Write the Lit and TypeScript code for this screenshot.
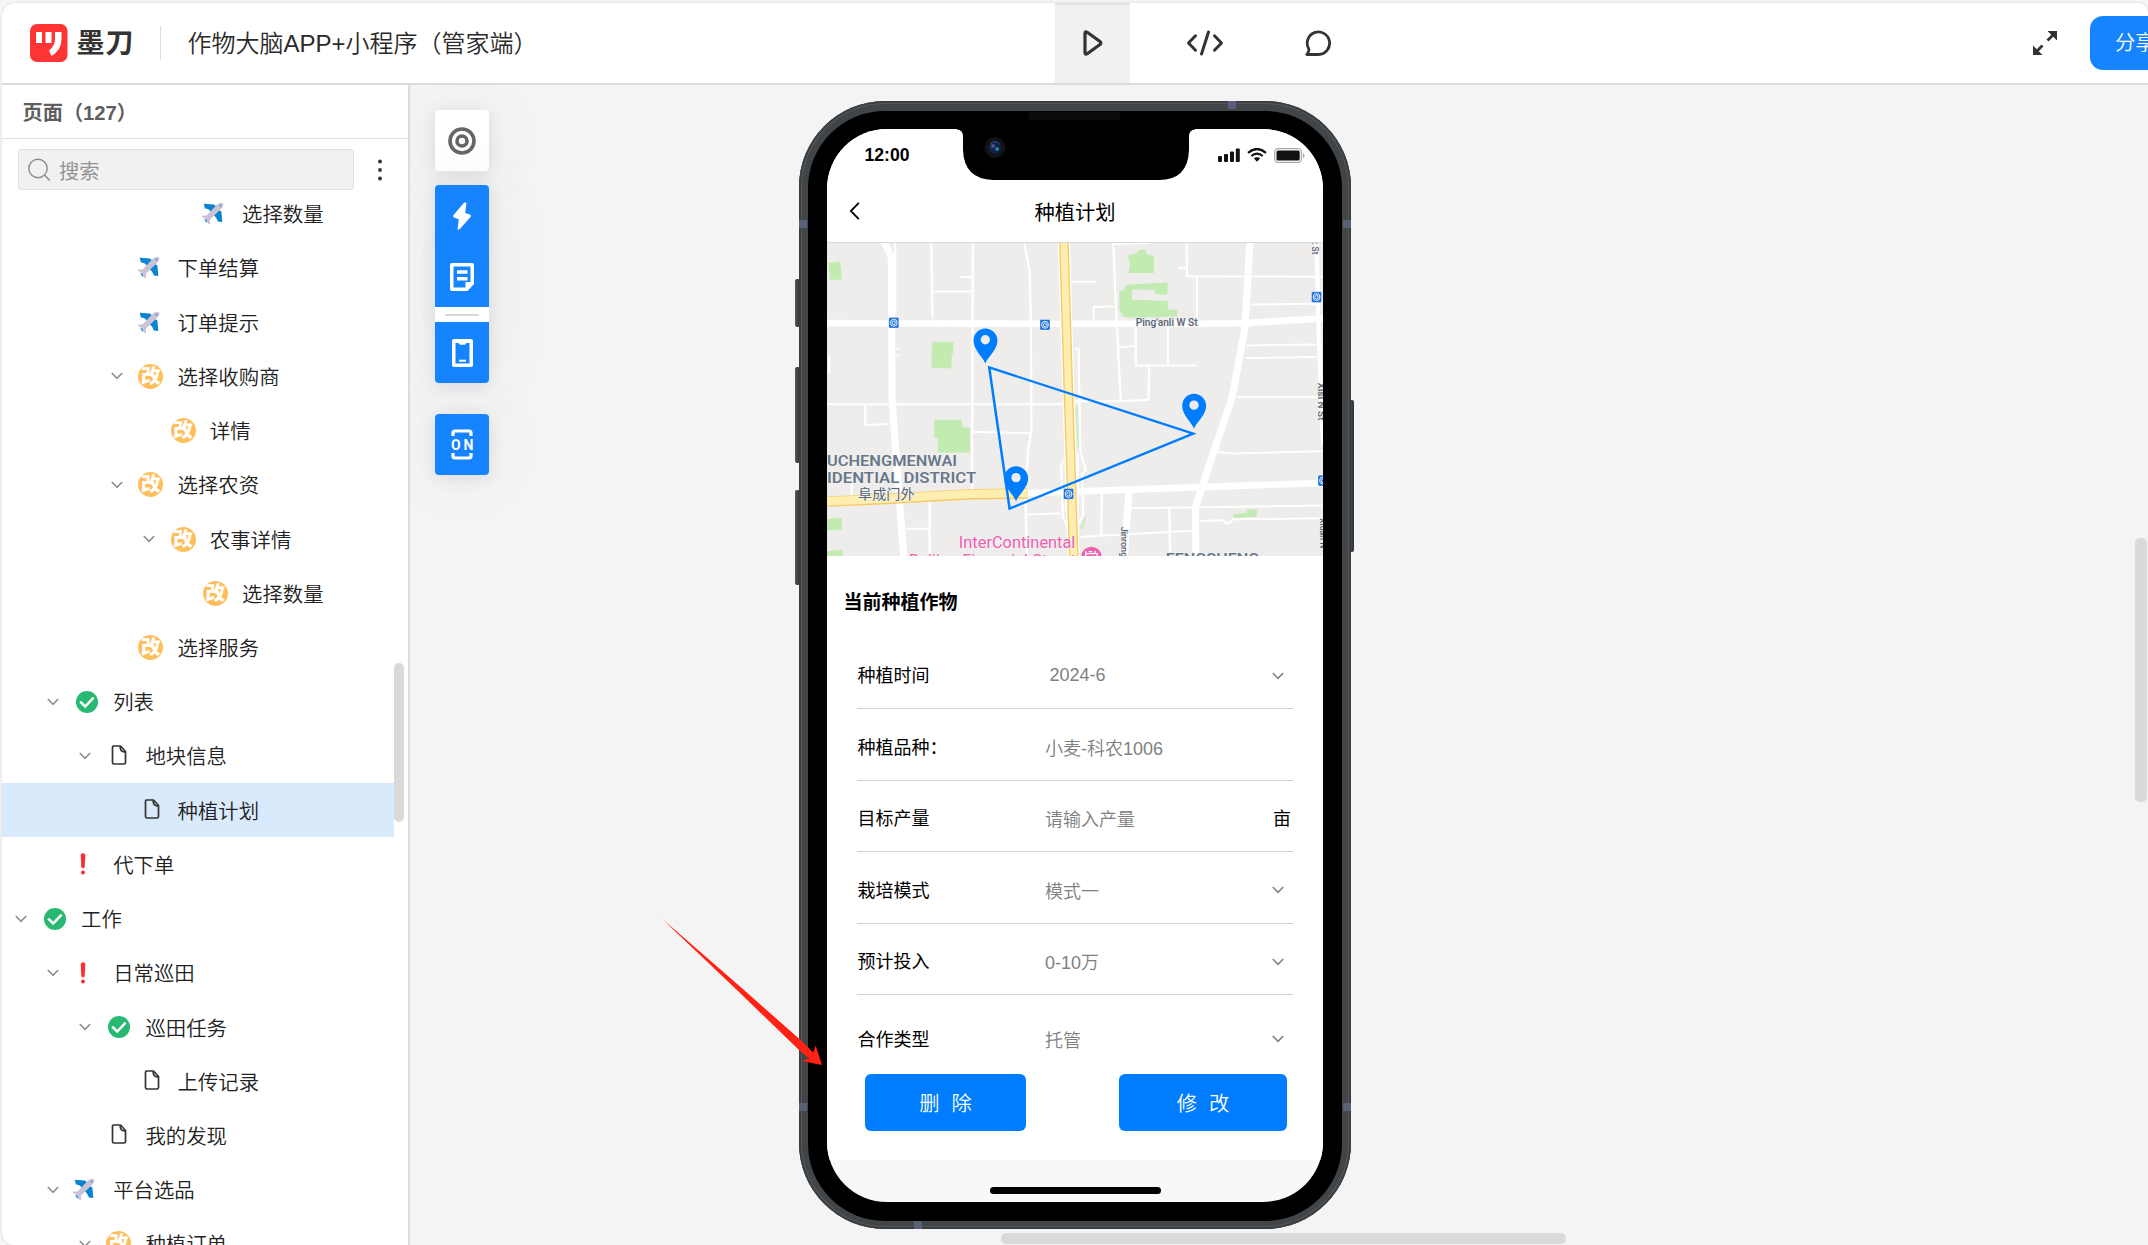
import { LitElement, html, svg, css, nothing } from "lit";
import { customElement, property } from "lit/decorators.js";

type IconKind = "plane" | "edit" | "done" | "file" | "warn";

interface TreeItem {
  label: string;
  level: number;
  icon: IconKind;
  open?: boolean;
  selected?: boolean;
}

const TREE: TreeItem[] = [
  { label: "选择数量", level: 5, icon: "plane" },
  { label: "下单结算", level: 3, icon: "plane" },
  { label: "订单提示", level: 3, icon: "plane" },
  { label: "选择收购商", level: 3, icon: "edit", open: true },
  { label: "详情", level: 4, icon: "edit" },
  { label: "选择农资", level: 3, icon: "edit", open: true },
  { label: "农事详情", level: 4, icon: "edit", open: true },
  { label: "选择数量", level: 5, icon: "edit" },
  { label: "选择服务", level: 3, icon: "edit" },
  { label: "列表", level: 1, icon: "done", open: true },
  { label: "地块信息", level: 2, icon: "file", open: true },
  { label: "种植计划", level: 3, icon: "file", selected: true },
  { label: "代下单", level: 1, icon: "warn" },
  { label: "工作", level: 0, icon: "done", open: true },
  { label: "日常巡田", level: 1, icon: "warn", open: true },
  { label: "巡田任务", level: 2, icon: "done", open: true },
  { label: "上传记录", level: 3, icon: "file" },
  { label: "我的发现", level: 2, icon: "file" },
  { label: "平台选品", level: 1, icon: "plane", open: true },
  { label: "种植订单", level: 2, icon: "edit", open: true },
];

const chevron = html`<svg width="12" height="8" viewBox="0 0 12 8" fill="none" stroke="currentColor" stroke-width="1.600"><path d="M.8 1 6 6.3 11.2 1" /></svg>`;

const treeIcons: Record<IconKind, unknown> = {
  plane: html`<svg class="shift-plane" width="23" height="23" viewBox="0 0 23 23">
    <path d="M2.800 1.800 13 2.600 17 6 11 11.500 8 7.500 3.800 6.200z M21.300 20 20.400 9.500 17 7.500 12 12.500 15 15.500 17 19.500z M3.200 17.600 7 16.700 6 21z" fill="#0a84d0" />
    <path d="M22 1.200C20.500 0 17.500 1 15.600 3L5.500 13.600 1.500 13.400.6 14.400 4.600 17 5.400 18.500 8 22.600 9 21.700 9 17.600 19.500 7.600C22 5 23 2.500 22 1.200z" fill="#cbc2d6" />
    <path d="M18.700 2.800 20.200 4.300" stroke="#1b8fd4" stroke-width="1.200" />
  </svg>`,
  edit: html`<span class="badge">改</span>`,
  done: html`<svg width="22" height="22" viewBox="0 0 22 22"><circle cx="11" cy="11" r="11" fill="#27b872" /><path d="M4.200 10.700 9.200 15.500 17.600 6.600" fill="none" stroke="#fff" stroke-width="2.500" /></svg>`,
  file: html`<svg class="shift-file" width="16" height="20" viewBox="0 0 16 20" fill="none" stroke="#333" stroke-width="1.700"><path d="M2.200 1H9.500L14.500 6.500V17.500Q14.500 19 13 19H3Q1.500 19 1.500 17.500V2.200Q1.500 1 2.800 1z" stroke-linejoin="round" /><path d="M9.200 1.300Q8.800 7.200 14.200 6.800" /></svg>`,
  warn: html`<svg class="shift-warn" width="6" height="22" viewBox="0 0 6 22" fill="#fb2f2f"><path d="M.7 2Q.9.200 3 .2T5.300 2L4.700 14Q4.500 15.300 3 15.300T1.300 14z" /><circle cx="3" cy="19.600" r="2" /></svg>`,
};

@customElement("page-tree")
class PageTree extends LitElement {
  static styles = css`
    :host { display: flex; flex-direction: column; width: 406px; flex: none; background: #fff; border-right: 2px solid #dcdcdc; position: relative; border-bottom-left-radius: 12px; overflow: hidden; }
    .title { height: 53px; flex: none; padding-left: 20.500px; display: flex; align-items: center; border-bottom: 1px solid #e2e2e2; font-size: 20.200px; font-weight: 700; color: #5e5e5e; }
    .tools { display: flex; align-items: center; padding: 10px 0 0 16px; gap: 24px; flex: none; }
    .search { width: 336px; height: 41px; box-sizing: border-box; border: 1px solid #e2e2e2; border-radius: 3px; background: #f1f1f1; display: flex; align-items: center; padding-left: 9px; gap: 8px; color: #949494; font-size: 20.300px; }
    .list { flex: 1; min-height: 0; overflow: hidden; }
    .rows { margin-top: -3.400px; width: 392px; }
    .row { height: 54.230px; display: flex; align-items: center; color: #222; font-size: 20.400px; font-weight: 350; white-space: nowrap; }
    .row.selected { background: #daeafd; }
    .indent { flex: none; }
    .arrow { width: 14px; display: flex; justify-content: center; color: #8e8e8e; flex: none; }
    .icon { width: 42px; display: flex; justify-content: center; align-items: center; flex: none; margin: 0 5px 0 6.500px; }
    .name { padding-bottom: 1px; }
    .shift-plane { margin-right: 7px; }
    .shift-warn { margin-right: 9px; }
    .shift-file { margin-bottom: 2px; }
    .badge { width: 25px; height: 25px; border-radius: 50%; background: #ffbe5c; color: #fff; font-size: 19.500px; line-height: 24px; text-align: center; font-weight: 900; margin-left: -1.500px; }
    .thumb { position: absolute; left: 392px; top: 578px; width: 10px; height: 159px; border-radius: 5px; background: #d9d9d9; }
  `;

  render() {
    return html`
      <div class="title">页面（127）</div>
      <div class="tools">
        <div class="search">
          <svg width="23" height="24" viewBox="0 0 23 24" fill="none" stroke="#8c8c8c" stroke-width="1.400"><circle cx="10" cy="10.500" r="9.200" /><path d="M16.500 17 21.800 22.500" /></svg>
          <span>搜索</span>
        </div>
        <svg width="4" height="22" viewBox="0 0 4 22" fill="#333"><circle cx="2" cy="2.500" r="1.900" /><circle cx="2" cy="11" r="1.900" /><circle cx="2" cy="19.500" r="1.900" /></svg>
      </div>
      <div class="list"><div class="rows">
        ${TREE.map(
          (item) => html`<div class="row ${item.selected ? "selected" : ""}">
            <span class="indent" style="width:${11.5 + item.level * 32.2}px"></span>
            <span class="arrow">${item.open ? chevron : nothing}</span>
            <span class="icon">${treeIcons[item.icon]}</span>
            <span class="name">${item.label}</span>
          </div>`
        )}
      </div></div>
      <div class="thumb"></div>
    `;
  }
}

const station = (x: number, y: number) => svg`<g transform="translate(${x} ${y})">
  <rect x="-14" y="-16" width="28" height="32" rx="4" fill="#1a6fdc" stroke="#fff" stroke-width="1" />
  <ellipse rx="9.500" ry="10.500" fill="none" stroke="#fff" stroke-width="2.600" />
  <path d="M4.500 -4Q0 -8 -3.500 -3.500T-3 5Q0 7 4.500 4M1 0H8" fill="none" stroke="#fff" stroke-width="2.600" />
</g>`;

const pin = (x: number, y: number) => svg`<path fill="#007dff" fill-rule="evenodd" transform="translate(${x} ${y})"
  d="M0 0C-6 -19 -33 -41 -33 -69C-33 -89 -18 -105 0 -105S34 -89 34 -69C34 -41 6 -19 0 0zM0 -85A13 14 0 1 0 0 -57A13 14 0 1 0 0 -85z" />`;

@customElement("field-map")
class FieldMap extends LitElement {
  static styles = css`
    :host { display: block; height: 313px; border-top: 1px solid #d8d8d8; }
    .map { display: block; width: 100%; height: 100%; background: #eeedec; }
    .street { fill: none; stroke: #fff; stroke-width: 6; }
    .road { fill: none; stroke: #fff; stroke-width: 20; }
    .lane { fill: none; stroke: #fff; stroke-width: 12; }
    .park { fill: #c1ebb0; }
    .label { font-family: Roboto, "Noto Sans CJK SC", sans-serif; paint-order: stroke; stroke: #f3f2f1; stroke-width: 4; fill: #566575; }
    .small { font-weight: 500; }
    .district { font-size: 45px; font-weight: 600; fill: #68788b; }
    .hotel { fill: #ee5fb0; stroke: #f7f1f4; }
  `;

  render() {
    return html`<svg class="map" viewBox="76 38 1388 938" preserveAspectRatio="none">
      <g class="park">
        <path d="M79 97 112 93 118 147 85 150zM370 334H429V372L425 374 424 414 368 411zM376 568H452L457 590 476 592V666H386V624L376 620zM76 865 118 861V899H76zM76 962 120 957V976H76zM918 75 943 69 948 58H968L971 72 991 77V128H920L924 100zM915 163 1029 156V192H998L990 178 930 177V207L1029 212 1030 237 1056 239V258L930 262 905 259 894 240V182L908 178zM1212 850 1248 847 1254 835 1279 838V858L1214 862z" />
        <path d="M770 530 778 528 782 640 776 660zM795 860 803 858 790 900 785 890z" opacity=".6" />
      </g>
      <g class="street">
        <path d="M368 38 371 265M371 183H484M484 38 482 780M449 140H484M628 38 643 125 647 290 648 600 640 650 630 780 636 976M76 521H736M183 524V584L250 580M484 604 648 608M761 154H829M877 38 886 260 898 512M822 267V230L880 228M872 41 980 38M1082 38 1084 138 1464 139M1059 114H1082M1111 140V270M940 290V405H1111M1030 290V405M977 405 976 508 890 512 770 512M888 351 938 346M1262 222 1445 220M1250 345 1445 342M1248 383 1445 380M1225 500H1450M1168 664 1210 669 1464 662M928 833 1464 825M1120 872 1182 868 1192 877H1203L1212 866 1464 863M786 918 1096 900M1034 834 1036 976M845 788 843 915M298 894H363M363 815V976M632 852 730 849M147 750 144 795M82 375V430M268 355H278M268 375H278M267 38V250" />
        <path d="M736 690 731 710 736 860 755 900M770 355H780L785 660 800 720 790 730 793 850 775 890M745 670V840M778 670V840" />
      </g>
      <path class="road" d="M234 30 256 80 258 500 272 720 292 990" />
      <path class="road" d="M76 278 660 280 1100 280 1250 278 1464 264" />
      <path class="road" d="M1259 38 1246 290 1210 500 1150 690 1107 830 1108 976" />
      <path class="road" d="M630 788 900 778 1464 757" />
      <path class="road" d="M921 785 908 976" />
      <path class="lane" d="M1446 38 1452 310 1464 640" />
      <path d="M76 813 230 806 480 791 637 789" fill="none" stroke="#f5cb68" stroke-width="31" />
      <path d="M76 812 230 805 480 790 637 788" fill="none" stroke="#ffeeb0" stroke-width="25" />
      <path d="M739 38 752 500 767 990" fill="none" stroke="#fff" stroke-width="34" />
      <path d="M739 38 752 500 767 990" fill="none" stroke="#f5cb68" stroke-width="27" />
      <path d="M739 38 752 500 767 990" fill="none" stroke="#ffeeb0" stroke-width="19" />
      ${station(263, 277)}${station(686, 283)}${station(1446, 200)}${station(752, 790)}${station(1464, 750)}
      <text class="label small" x="940" y="286" font-size="31" textLength="173" lengthAdjust="spacingAndGlyphs">Ping'anli W St</text>
      <text class="label small" font-size="25" transform="translate(1433 36) rotate(90)">: St</text>
      <text class="label small" font-size="25" transform="translate(1450 456) rotate(90)" textLength="114" lengthAdjust="spacingAndGlyphs">Xisi N St</text>
      <text class="label small" font-size="27" transform="translate(899 888) rotate(90)">Jinrong</text>
      <text class="label small" font-size="26" transform="translate(1457 862) rotate(90)">Xidan N</text>
      <text class="label district" x="76" y="705" textLength="364" lengthAdjust="spacingAndGlyphs">UCHENGMENWAI</text>
      <text class="label district" x="76" y="756" textLength="418" lengthAdjust="spacingAndGlyphs">IDENTIAL DISTRICT</text>
      <text class="label" x="163" y="806" font-size="42" textLength="158" lengthAdjust="spacingAndGlyphs">阜成门外</text>
      <text class="label hotel" x="445" y="953" font-size="49" textLength="326" lengthAdjust="spacingAndGlyphs">InterContinental</text>
      <text class="label hotel" x="305" y="1007" font-size="49" textLength="467" lengthAdjust="spacingAndGlyphs">Beijing Financial Street</text>
      <text class="label district" x="1024" y="1001" textLength="262" lengthAdjust="spacingAndGlyphs">FENGSHENG</text>
      <circle cx="816" cy="976" r="28" fill="#ee5fb0" />
      <path d="M800 962V976M800 969H832V976M808 963H818M826 960V969" stroke="#fff" stroke-width="4" fill="none" />
      <path d="M530 411 1101 609 587 834z" fill="none" stroke="#007dff" stroke-width="7" />
      ${pin(519, 399)}${pin(1103, 595)}${pin(605, 812)}
    </svg>`;
  }
}

interface Field {
  label: string;
  value: string;
  kind: "select" | "text" | "unit";
}

const FIELDS: Field[] = [
  { label: "种植时间", value: "2024-6", kind: "select" },
  { label: "种植品种：", value: "小麦-科农1006", kind: "text" },
  { label: "目标产量", value: "请输入产量", kind: "unit" },
  { label: "栽培模式", value: "模式一", kind: "select" },
  { label: "预计投入", value: "0-10万", kind: "select" },
  { label: "合作类型", value: "托管", kind: "select" },
];

@customElement("phone-preview")
class PhonePreview extends LitElement {
  static styles = css`
    :host { display: block; position: relative; width: 552px; height: 1128px; flex: none; color: #000; }
    .key { position: absolute; width: 5px; background: linear-gradient(90deg, #55585b, #2c2e30); border-radius: 2px; }
    .key-a { left: -4px; top: 178px; height: 48px; }
    .key-b { left: -4px; top: 266px; height: 96px; }
    .key-c { left: -4px; top: 389px; height: 95px; }
    .key-d { right: -3px; top: 299px; height: 152px; }
    .frame { position: relative; box-sizing: border-box; height: 1128px; border-radius: 86px; background: #414548; padding: 9.500px 9.500px 8.500px 9px; overflow: hidden; box-shadow: inset 0 0 0 2px #3b3f42, inset 0 0 0 3px #55595c; }
    .band { position: absolute; background: #5b5f78; width: 8px; height: 8px; }
    .band-t { left: 429px; top: 0; } .band-b { left: 115px; bottom: 0; }
    .band-tl { left: 0; top: 119px; } .band-tr { right: 0; top: 119px; }
    .band-bl { left: 0; bottom: 118px; } .band-br { right: 0; bottom: 118px; }
    .bezel { position: relative; box-sizing: border-box; height: 100%; background: #000; border-radius: 77px; padding: 18.500px 18.500px 18.500px 19px; }
    .screen { height: 100%; background: #f8f8f8; border-radius: 60px; overflow: hidden; display: flex; flex-direction: column; }
    .notch { position: absolute; left: 149px; top: 18px; display: block; }
    .speaker { position: absolute; left: 221px; top: 1px; width: 91px; height: 8px; background: #0b0b0b; border-radius: 0 0 3px 3px; }
    .status { height: 50px; flex: none; box-sizing: border-box; background: #fff; display: flex; align-items: center; justify-content: space-between; padding: 2px 18.500px 0 37.500px; font-size: 17.600px; font-weight: 700; }
    .signals { display: flex; align-items: center; gap: 7px; }
    .nav { height: 63px; flex: none; background: #fff; display: grid; grid-template-columns: 1fr auto 1fr; align-items: center; padding: 0 21.500px; box-sizing: border-box; font-size: 20.300px; }
    .sheet { flex: none; height: 604px; background: #fff; box-sizing: border-box; padding: 33px 30px 0; }
    .heading { font-size: 19px; font-weight: 700; line-height: 28px; margin-left: -13.500px; }
    .fields { margin-top: 20.500px; }
    .field { box-sizing: border-box; height: 71.550px; border-bottom: 1.500px solid #d8cccc; display: flex; align-items: center; font-size: 18px; padding: 6px 2px 0 .5px; white-space: nowrap; }
    .field:last-child { border: 0; padding-top: 16px; }
    .name { width: 187.500px; flex: none; }
    .name, .unit { padding-bottom: 3px; }
    .value { flex: 1; color: #808080; font-weight: 350; padding-bottom: 1px; }
    .field:first-child .value { padding-left: 4.500px; }
    .chev { display: flex; color: #808080; margin-right: 7px; }
    .actions { display: flex; justify-content: space-between; padding: 0 6px 0 8px; margin-top: 7px; }
    .btn { height: 57px; box-sizing: border-box; border-radius: 6px; background: #007dff; color: #fff; font-size: 20.300px; display: flex; align-items: center; justify-content: center; gap: 12px; font-weight: 350; }
    .del { width: 161px; } .mod { width: 168px; }
    .bar { width: 171px; height: 7px; border-radius: 4px; background: #000; margin: 27px auto 0; }
  `;

  render() {
    return html`
      <i class="key key-a"></i><i class="key key-b"></i><i class="key key-c"></i><i class="key key-d"></i>
      <div class="frame">
        <i class="band band-t"></i><i class="band band-b"></i><i class="band band-tl"></i><i class="band band-tr"></i><i class="band band-bl"></i><i class="band band-br"></i>
        <div class="bezel">
          <div class="screen">
            <div class="status">
              <span>12:00</span>
              <span class="signals">
                <svg width="22" height="14" viewBox="0 0 22 14"><g fill="#111"><rect x="0" y="8" width="4" height="6" rx="1" /><rect x="6" y="6" width="4" height="8" rx="1" /><rect x="12" y="3.500" width="4" height="10.500" rx="1" /><rect x="17.800" y=".5" width="4" height="13.500" rx="1" /></g></svg>
                <svg width="20" height="14" viewBox="0 0 20 14" fill="none" stroke="#111" stroke-width="2.200"><path d="M1 4.800Q10 -2.800 19 4.800M4.300 8Q10 3.300 15.700 8" /><path d="M10 13.800 6.800 10.300Q10 8 13.200 10.300z" fill="#111" stroke="none" /></svg>
                <svg width="31" height="15" viewBox="0 0 31 15"><rect x=".7" y=".7" width="26.800" height="13.600" rx="3.500" fill="none" stroke="#aaa" stroke-width="1.300" /><rect x="2.500" y="2.500" width="23.200" height="10" rx="1.500" fill="#111" /><path d="M29 5V10Q30.500 9.500 30.500 7.500T29 5z" fill="#aaa" /></svg>
              </span>
            </div>
            <div class="nav">
              <svg width="11" height="18" viewBox="0 0 11 18" fill="none" stroke="#000" stroke-width="1.800"><path d="M9.800 .8 1.800 9 9.800 17.200" /></svg>
              <span>种植计划</span><span></span>
            </div>
            <field-map></field-map>
            <div class="sheet">
              <div class="heading">当前种植作物</div>
              <div class="fields">
                ${FIELDS.map(
                  (f) => html`<div class="field">
                    <span class="name">${f.label}</span>
                    <span class="value">${f.value}</span>
                    ${f.kind === "select" ? html`<span class="chev">${chevron}</span>` : f.kind === "unit" ? html`<span class="unit">亩</span>` : nothing}
                  </div>`
                )}
              </div>
              <div class="actions">
                <div class="btn del"><span>删</span><span>除</span></div>
                <div class="btn mod"><span>修</span><span>改</span></div>
              </div>
            </div>
            <div class="bar"></div>
          </div>
          <svg class="notch" width="238" height="51" viewBox="0 0 238 51">
            <path d="M0 0H238V.5Q232 .5 232 8V21Q231 51 202 51H36Q7 50 6 21V8Q6 .5 0 .5z" />
            <circle cx="38" cy="18.500" r="10.500" fill="#111214" /><circle cx="38" cy="18.500" r="6.200" fill="#122448" /><circle cx="36" cy="17" r="2" fill="#4a4f96" /><circle cx="40" cy="20" r="1.800" fill="#3a86b8" /><path d="M33.500 14.500Q38 10.500 42.500 15" fill="none" stroke="#2a5590" />
          </svg>
          <i class="speaker"></i>
        </div>
      </div>
    `;
  }
}

@customElement("app-root")
class AppRoot extends LitElement {
  @property() projectName = "作物大脑APP+小程序（管家端）";

  static styles = css`
    :host { display: block; box-sizing: border-box; width: 2148px; height: 1245px; background: #f6f6f6; padding: 3px 0 0 2px; overflow: hidden; font-family: "Liberation Sans", "Noto Sans CJK SC", sans-serif; color: #333; }
    .window { display: flex; flex-direction: column; height: 1242px; border-radius: 14px 10px 0 12px; background: #f4f4f4; overflow: hidden; box-shadow: 0 0 2px 1px #e4e4e4; }
    .header { height: 80px; flex: none; background: #fff; border-bottom: 2px solid #dcdcdc; display: flex; align-items: center; }
    .brand { display: flex; align-items: center; width: 159px; box-sizing: border-box; height: 34px; padding-left: 28px; border-right: 1px solid #dedede; }
    .logo { flex: none; }
    .project { margin-left: 26.500px; font-size: 24px; width: 840px; white-space: nowrap; font-weight: 350; padding-bottom: 2.500px; color: #2a2a2a; }
    .tabs { display: flex; height: 80px; margin-left: 27.500px; }
    .tab { width: 75px; display: flex; align-items: center; justify-content: center; margin-right: 38.500px; box-sizing: border-box; }
    .tab.active { background: #f1f1f1; box-shadow: inset 0 2px #e4e4e4; margin-right: 37px; }
    .right { margin-left: auto; display: flex; align-items: center; gap: 32px; }
    .share { width: 58px; height: 54px; border-radius: 13px 0 0 13px; background: #1684ff; color: #fff; font-size: 20.300px; line-height: 54px; overflow: hidden; white-space: nowrap; text-indent: 25px; font-weight: 350; }
    .body { flex: 1; min-height: 0; display: flex; }
    .canvas { flex: 1; min-width: 0; position: relative; display: flex; align-items: flex-start; overflow: hidden; background: #f4f4f4; }
    .toolbar { width: 54px; margin: 25px 310px 0 25px; display: flex; flex-direction: column; flex: none; }
    .group { border-radius: 4px; background: #1684ff; box-shadow: 0 3px 16px rgba(70, 90, 110, .14), 0 0 70px rgba(90, 100, 110, .07); margin-bottom: 14px; }
    .group.light { background: #fff; }
    .group.gap { margin-bottom: 31px; }
    .tool { height: 61px; display: flex; align-items: center; justify-content: center; }
    .split { height: 15px; background: #fff; display: flex; align-items: center; justify-content: center; }
    .line { width: 34px; height: 2px; background: #d9d9d9; }
    .on { font-family: Roboto, sans-serif; font-weight: 700; font-size: 14px; }
    phone-preview { margin-top: 16px; }
    .pointer { position: absolute; left: 249px; top: 830px; }
    .vbar { position: absolute; right: 1px; top: 453px; width: 12px; height: 264px; border-radius: 5px; background: #dadada; }
    .hbar { position: absolute; left: 591px; bottom: 1px; width: 565px; height: 11px; border-radius: 5px; background: #dadada; }
  `;

  render() {
    return html`<div class="window">
      <div class="header">
        <div class="brand">
          <svg class="logo" width="108" height="38" viewBox="0 0 108 38">
            <rect width="37.500" height="38" rx="7" fill="#ff3535" />
            <path d="M6 8H12V19H6zM15.500 8H21.500V19H15.500zM25 8H31.500V15Q31.500 26 21.500 32L19 26.500Q25 22 25 15z" fill="#fff" />
            <text x="46.500" y="28.500" font-size="28" font-weight="700" fill="#333" textLength="57">墨刀</text>
          </svg>
        </div>
        <div class="project">${this.projectName}</div>
        <div class="tabs">
          <div class="tab active"><svg width="20" height="26" viewBox="0 0 20 26" fill="none" stroke="#333" stroke-width="3.200" stroke-linejoin="round"><path d="M2 3.500Q2 1 4.200 2.300L17 11.500Q18.700 13 17 14.500L4.200 23.700Q2 25 2 22.500z" /></svg></div>
          <div class="tab"><svg width="38" height="26" viewBox="0 0 38 26" fill="none" stroke="#333" stroke-width="3" stroke-linecap="round" stroke-linejoin="round"><path d="M9.500 5.800 2.500 13 9.500 20.200M28.500 5.800 35.500 13 28.500 20.200M22.500 2 15.500 24" /></svg></div>
          <div class="tab"><svg width="28" height="27" viewBox="0 0 28 27" fill="none" stroke="#333" stroke-width="2.800" stroke-linejoin="round"><path d="M2.800 24.500H14.500A11.200 11.300 0 1 0 4.800 19Q5.500 21 2.800 24.500z" /></svg></div>
        </div>
        <div class="right">
          <svg width="26" height="26" viewBox="0 0 26 26" fill="none" stroke="#333" stroke-width="2.800"><path d="M15.500 10.500 23 3M10.500 15.500 3 23" /><path d="M15.500 1H25V10.500L21 6.500 19.500 5zM10.500 25H1V15.500L5 19.500 6.500 21z" fill="#333" stroke="none" /></svg>
          <div class="share">分享</div>
        </div>
      </div>
      <div class="body">
        <page-tree></page-tree>
        <div class="canvas">
          <div class="toolbar">
            <div class="group light"><div class="tool"><svg width="28" height="28" viewBox="0 0 28 28" fill="none" stroke="#666"><circle cx="14" cy="14" r="12" stroke-width="3.600" /><circle cx="14" cy="14" r="5" stroke-width="3.600" /></svg></div></div>
            <div class="group gap">
              <div class="tool"><svg width="18" height="28" viewBox="0 0 18 28" fill="#fff"><path d="M11 .8Q13.500 -.3 13.300 2L12.200 11 17 12.600Q18.500 13.300 17.500 15L6.800 27Q4.800 28.600 4.600 26.500L5.800 17.200 1 15.500Q-.5 14.500.6 13z" /></svg></div>
              <div class="tool"><svg width="24" height="28" viewBox="0 0 24 28"><path fill="#fff" fill-rule="evenodd" d="M2 0H22Q24 0 24 2V21L17.500 28H2Q0 28 0 26V2Q0 0 2 0zM3.500 3.500V24.500H15.500V19H20.500V3.500z" /><path d="M7 9H17.500M7 15.800H17.500" stroke="#fff" stroke-width="3.600" /></svg></div>
              <div class="split"><span class="line"></span></div>
              <div class="tool"><svg width="21" height="28" viewBox="0 0 21 28"><path fill="#fff" fill-rule="evenodd" d="M2 0H19Q21 0 21 2V26Q21 28 19 28H2Q0 28 0 26V2Q0 0 2 0zM3.500 4V24.500H17.500V4H14.500L13 5.800H8L6.500 4z" /><path d="M7 21.700H14" stroke="#fff" stroke-width="2" /></svg></div>
            </div>
            <div class="group"><div class="tool"><svg width="24" height="31" viewBox="-1 0 24 31"><path d="M2 7V4Q2 2 4 2H18Q20 2 20 4V7M2 24V27Q2 29 4 29H18Q20 29 20 27V24" fill="none" stroke="#fff" stroke-width="3.200" /><text class="on" x="0" y="20.500" textLength="22.500" fill="#fff">ON</text></svg></div></div>
          </div>
          <phone-preview></phone-preview>
          <svg class="pointer" width="168" height="152" viewBox="0 0 168 152">
            <defs><linearGradient id="fade" x1="0" y1="0" x2="1" y2="1"><stop offset="0" stop-color="#ff2214" stop-opacity=".1" /><stop offset=".09" stop-color="#ff2214" /></linearGradient></defs>
            <path d="M0 1 81 71.500 141 124.500 154.300 137.500 156.700 130.500 163 150 143 146 150 143.500 139 134 80 77z" fill="url(#fade)" />
          </svg>
          <i class="vbar"></i><i class="hbar"></i>
        </div>
      </div>
    </div>`;
  }
}
